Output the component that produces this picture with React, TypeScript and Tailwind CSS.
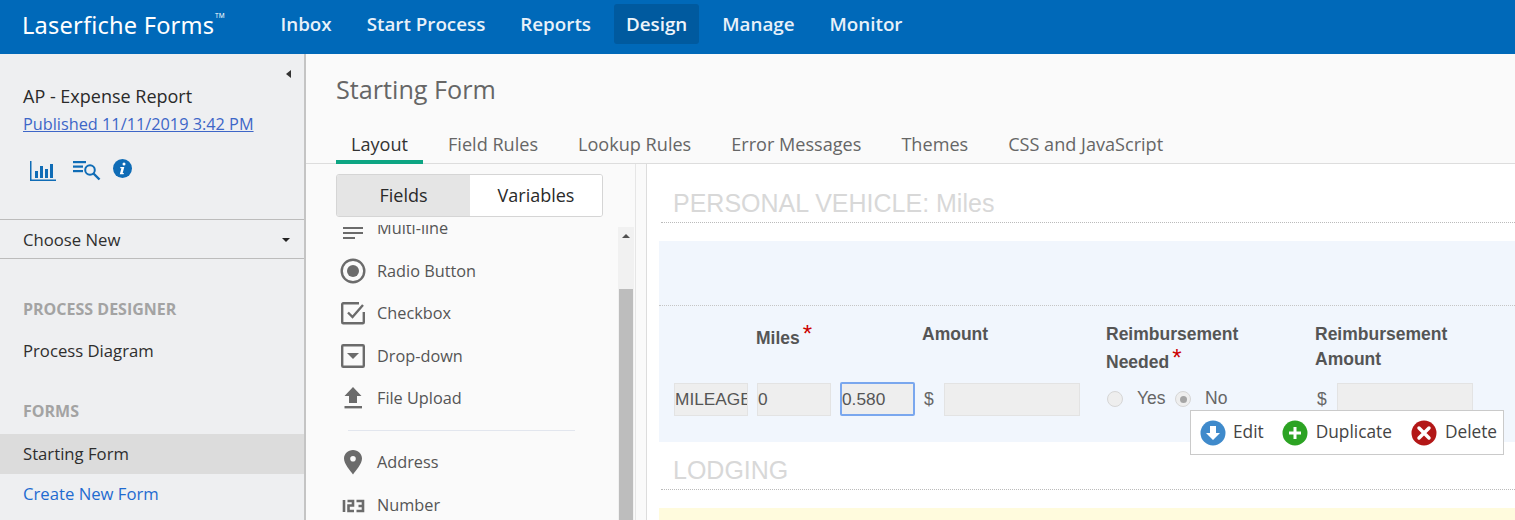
import type { ReactNode } from "react";

const navItems = ["Inbox", "Start Process", "Reports", "Design", "Manage", "Monitor"];
const tabs = ["Layout", "Field Rules", "Lookup Rules", "Error Messages", "Themes", "CSS and JavaScript"];

function ChartIcon() {
  return (
    <svg width="27" height="20" viewBox="0 0 27 20" fill="#0f6cb6">
      <rect x="0" y="0" width="1.500" height="20" />
      <rect x="0" y="18.500" width="26" height="1.500" />
      <rect x="5" y="10" width="3" height="7" />
      <rect x="10" y="5" width="3" height="12" />
      <rect x="15" y="8" width="3" height="9" />
      <rect x="20" y="3" width="3" height="14" />
    </svg>
  );
}

function SearchListIcon() {
  return (
    <svg width="28" height="20" viewBox="0 0 28 20" fill="none">
      <rect x="0" y="0" width="13" height="2.200" fill="#0f6cb6" />
      <rect x="0" y="4.500" width="10" height="2.200" fill="#0f6cb6" />
      <rect x="0" y="9" width="10" height="2.200" fill="#0f6cb6" />
      <circle cx="17" cy="9" r="4.800" stroke="#0f6cb6" strokeWidth="2" />
      <path d="M20.500 12.500L26.500 18.500" stroke="#0f6cb6" strokeWidth="2.400" />
    </svg>
  );
}

function InfoIcon() {
  return (
    <svg width="19" height="19" viewBox="0 0 19 19">
      <circle cx="9.500" cy="9.500" r="9.500" fill="#0f6cb6" />
      <circle cx="11" cy="5" r="1.500" fill="#fff" />
      <path d="M7.400 8h3.900l-1.600 6h1.200l-.3 1.200H6.800l1.600-6H7.100z" fill="#fff" />
    </svg>
  );
}

const fieldIcons: Record<string, ReactNode> = {
  "Radio Button": (
    <svg width="26" height="26" viewBox="0 0 26 26">
      <circle cx="13" cy="13" r="11.300" fill="none" stroke="#6b6b6b" strokeWidth="2.400" />
      <circle cx="13" cy="13" r="6" fill="#6b6b6b" />
    </svg>
  ),
  Checkbox: (
    <svg width="26" height="26" viewBox="0 0 26 26" fill="none" stroke="#6b6b6b" strokeWidth="2.400">
      <path d="M19 3.200H3.200a1 1 0 00-1 1v18a1 1 0 001 1h19.600a1 1 0 001-1V12" />
      <path d="M8 12.500l4.500 4.500L23 5" />
    </svg>
  ),
  "Drop-down": (
    <svg width="26" height="26" viewBox="0 0 26 26">
      <rect x="2.200" y="2.200" width="21.600" height="21.600" rx="1" fill="none" stroke="#6b6b6b" strokeWidth="2.400" />
      <path d="M7 10h12l-6 6z" fill="#6b6b6b" />
    </svg>
  ),
  "File Upload": (
    <svg width="26" height="26" viewBox="0 0 26 26" fill="#6b6b6b">
      <path d="M13 2l8.500 9H17v7H9v-7H4.500z" />
      <rect x="4.500" y="21" width="17.500" height="2.400" />
    </svg>
  ),
  Address: (
    <svg width="26" height="26" viewBox="0 0 26 26">
      <path
        fillRule="evenodd"
        d="M13 1c5 0 9 3.700 9 8.500C22 15 16 21 13 25.500 10 21 4 15 4 9.500 4 4.700 8 1 13 1zm0 6a2.800 2.800 0 100 5.600A2.800 2.800 0 0013 7z"
        fill="#6b6b6b"
      />
    </svg>
  ),
  Number: (
    <svg width="26" height="26" viewBox="0 0 26 26" fill="none" stroke="#6b6b6b" strokeWidth="2.600">
      <path d="M4 8v12M7.500 9H13v4.500H8.500V19H14M16.500 9H23v10h-6.500M18.500 14H23" />
    </svg>
  ),
};

function FieldRow({ name }: { name: string }) {
  return (
    <div className="flex h-[42.500px] items-center gap-[11px] pl-[34px]">
      <span className="flex h-[26px] w-[26px] items-center justify-center">{fieldIcons[name]}</span>
      <span className="text-[16.300px] text-[#555]">{name}</span>
    </div>
  );
}

function Label({ children, required }: { children: ReactNode; required?: boolean }) {
  return (
    <span className="text-[17.500px] leading-[25px] font-bold text-[#555]">
      {children}
      {required && <span className="relative -top-[2px] ml-[3px] text-[24px] leading-none font-normal text-[#c00]">*</span>}
    </span>
  );
}

function TextBox({ value, className }: { value?: string; className: string }) {
  return (
    <input
      readOnly
      value={value ?? ""}
      className={`h-[33px] border border-[#e3e3e3] bg-[#eee] px-0 text-[17.300px] text-[#555] outline-none ${className}`}
    />
  );
}

function Radio({ checked }: { checked?: boolean }) {
  return (
    <span className="flex h-[16px] w-[16px] items-center justify-center rounded-full border border-[#d6d6d6] bg-[#eee]">
      {checked && <span className="h-[7px] w-[7px] rounded-full bg-[#a5a5a5]" />}
    </span>
  );
}

function ActionIcon({ color, children }: { color: string; children: ReactNode }) {
  return (
    <svg width="26" height="26" viewBox="0 0 26 26">
      <circle cx="13" cy="13" r="12.500" fill={color} />
      {children}
    </svg>
  );
}

export default function App() {
  return (
    <div className="flex h-[520px] w-[1515px] flex-col overflow-hidden bg-white font-['Open_Sans',sans-serif]">
      {/* top bar */}
      <header className="flex h-[54px] shrink-0 items-start bg-[#0069b9] pt-[4px]">
        <div className="relative w-[268px] pl-[22px] text-[23.600px] leading-[42px] tracking-[0.2px] text-white font-['Noto_Sans',sans-serif]">
          Laserfiche Forms
          <span className="absolute top-[9px] left-[215px] text-[6.500px] leading-none">TM</span>
        </div>
        <nav className="ml-[0.500px] flex items-center">
          {navItems.map((item) => (
            <a
              key={item}
              className={`mr-[11px] flex h-[40px] items-center rounded-[3px] px-[12px] text-[18.800px] font-semibold ${
                item === "Design" ? "bg-[#005a9f] text-[#eef4fa]" : "text-[#e8f1f9]"
              }`}
            >
              {item}
            </a>
          ))}
        </nav>
      </header>

      <div className="flex min-h-0 flex-1">
        {/* left sidebar */}
        <aside className="relative w-[306px] shrink-0 border-r-2 border-[#c4c4c4] bg-[#eeeff1]">
          <span className="absolute top-[16px] right-[13px] h-0 w-0 border-y-[4px] border-r-[5px] border-y-transparent border-r-[#333]" />
          <div className="h-[165px] pt-[29px] pl-[23px]">
            <div className="text-[18px] leading-[26px] font-medium text-[#2a2a2a]">AP - Expense Report</div>
            <a className="mt-[1px] block text-[16.300px] leading-[29px] text-[#3d66c8] underline">Published 11/11/2019 3:42 PM</a>
            <div className="mt-[22px] flex items-start gap-[16px] pl-[7px]">
              <ChartIcon />
              <SearchListIcon />
              <span className="-mt-[2px] -ml-[4px]">
                <InfoIcon />
              </span>
            </div>
          </div>
          <div className="flex h-[40px] items-center justify-between border-y border-[#bcbcbc] pt-[2px] pr-[14px] pl-[23px] text-[16.700px] font-medium text-[#2e2e2e]">
            Choose New
            <span className="h-0 w-0 border-x-[4.500px] border-t-[4.500px] border-x-transparent border-t-[#222]" />
          </div>
          <div className="mt-[38px] pl-[23px] text-[16px] leading-[24px] font-bold text-[#a3a3a3]">PROCESS DESIGNER</div>
          <div className="mt-[18px] pl-[23px] text-[16.700px] leading-[24px] font-medium text-[#2e2e2e]">Process Diagram</div>
          <div className="mt-[36px] pl-[23px] text-[16px] leading-[24px] font-bold text-[#a3a3a3]">FORMS</div>
          <div className="mt-[11px] flex h-[40px] items-center bg-[#dcdcdc] pl-[23px] text-[16.700px] font-medium text-[#2e2e2e]">Starting Form</div>
          <div className="flex h-[40px] items-center pl-[23px] text-[16.700px] font-medium text-[#1f6bd0]">Create New Form</div>
        </aside>

        {/* main */}
        <main className="flex min-w-0 flex-1 flex-col bg-[#fafafa]">
          <div className="h-[110px] shrink-0 border-b border-[#ddd]">
            <h1 className="pt-[16px] pl-[30px] text-[25.200px] leading-[38px] text-[#666]">Starting Form</h1>
            <div className="mt-[17px] flex pl-[30px]">
              {tabs.map((tab) => (
                <div
                  key={tab}
                  className={`mr-[10px] h-[39px] px-[15px] pt-[6px] text-[18.100px] leading-[26px] ${
                    tab === "Layout" ? "border-b-4 border-[#0da583] text-[#333]" : "text-[#666]"
                  }`}
                >
                  {tab}
                </div>
              ))}
            </div>
          </div>

          <div className="flex min-h-0 flex-1">
            {/* field palette */}
            <div className="w-[341px] shrink-0 border-r border-[#ddd]">
              <div className="flex h-full w-[330px] flex-col border-r border-[#e6e6e6]">
                <div className="mt-[10px] ml-[30px] flex h-[43px] w-[267px] shrink-0 overflow-hidden rounded-[3px] border border-[#d5d5d5] text-[18px] font-medium text-[#2a2a2a]">
                  <div className="flex w-[133px] items-center justify-center bg-[#e5e5e5]">Fields</div>
                  <div className="flex flex-1 items-center justify-center bg-white">Variables</div>
                </div>
                <div className="relative mt-[8px] min-h-0 flex-1 overflow-hidden">
                  <div className="-mt-[18px]">
                    <div className="flex h-[42.500px] items-center gap-[11px] pl-[34px]">
                      <svg width="26" height="26" viewBox="0 0 26 26" fill="#6b6b6b">
                        <rect x="3" y="12" width="20" height="2" />
                        <rect x="3" y="17" width="20" height="2" />
                        <rect x="3" y="22" width="12" height="2" />
                      </svg>
                      <span className="text-[16.300px] text-[#555]">Multi-line</span>
                    </div>
                    <FieldRow name="Radio Button" />
                    <FieldRow name="Checkbox" />
                    <FieldRow name="Drop-down" />
                    <FieldRow name="File Upload" />
                    <div className="my-[10px] mr-[60px] ml-[42px] border-t border-[#e2e6ee]" />
                    <FieldRow name="Address" />
                    <div className="pt-[1px]">
                      <FieldRow name="Number" />
                    </div>
                  </div>
                  {/* scrollbar */}
                  <div className="absolute top-[2px] right-[1px] bottom-0 w-[16px] bg-[#f1f1f1]">
                    <span className="absolute top-[7px] left-[4px] h-0 w-0 border-x-[4px] border-b-[4px] border-x-transparent border-b-[#505050]" />
                    <div className="absolute top-[62px] right-[1px] bottom-0 left-[1px] bg-[#bdbdbd]" />
                  </div>
                </div>
              </div>
            </div>

            {/* form canvas */}
            <div className="min-w-0 flex-1 bg-white">
              <div className="mt-[22px] mr-0 ml-[14px] h-[37px] border-b border-dotted border-[#bbb] pl-[12px] font-['Liberation_Sans',sans-serif] text-[25px] leading-[34px] text-[#d8d8d8]">
                PERSONAL VEHICLE: Miles
              </div>
              <section className="relative mt-[18px] ml-[12px] h-[201px] bg-[#f1f6fd] font-['Liberation_Sans',sans-serif]">
                <div className="h-[65px] border-b border-dotted border-[#c6c6c6]" />
                <div className="flex h-[76px] pt-[16px]">
                  <div className="ml-[97px] w-[166px] pt-[2px]">
                    <Label required>Miles</Label>
                  </div>
                  <div className="w-[184px]">
                    <Label>Amount</Label>
                  </div>
                  <div className="w-[209px]">
                    <Label>Reimbursement</Label>
                    <br />
                    <span className="relative top-[1px]">
                      <Label required>Needed</Label>
                    </span>
                  </div>
                  <div className="w-[140px]">
                    <Label>Reimbursement Amount</Label>
                  </div>
                </div>
                <div className="flex items-center pl-[15px] text-[17.500px] text-[#666]">
                  <TextBox value="MILEAGE" className="w-[74px]" />
                  <TextBox value="0" className="ml-[9px] w-[74px]" />
                  <input
                    readOnly
                    value="0.580"
                    className="ml-[9px] h-[34px] w-[75px] rounded-[2px] border-2 border-[#7aa7ee] bg-[#eee] px-0 text-[17.300px] text-[#555] outline-none"
                  />
                  <span className="ml-[9px] w-[20px]">$</span>
                  <TextBox className="w-[136px]" />
                  <span className="ml-[27px]">
                    <Radio />
                  </span>
                  <span className="ml-[14px] w-[38px] pb-[2px]">Yes</span>
                  <Radio checked />
                  <span className="ml-[14px] w-[112px] pb-[2px]">No</span>
                  <span className="w-[20px]">$</span>
                  <TextBox className="w-[136px]" />
                </div>
                {/* hover toolbar */}
                <div className="absolute top-[169px] left-[531px] flex h-[45px] w-[314px] items-center border border-[#cacaca] bg-white pl-[9px] font-['Open_Sans',sans-serif] text-[17.300px] leading-[22px] text-[#444]">
                  <ActionIcon color="#3f8acb">
                    <path d="M10 6h6v7h4l-7 7-7-7h4z" fill="#fff" />
                  </ActionIcon>
                  <span className="relative -top-[1px] ml-[7px]">Edit</span>
                  <span className="ml-[18px]">
                    <ActionIcon color="#2ca323">
                      <path d="M11.500 7h3v4.500H19v3h-4.500V19h-3v-4.500H7v-3h4.500z" fill="#fff" />
                    </ActionIcon>
                  </span>
                  <span className="relative -top-[1px] ml-[8px]">Duplicate</span>
                  <span className="ml-[19px]">
                    <ActionIcon color="#b31717">
                      <path d="M8 8l10 10M18 8L8 18" stroke="#fff" strokeWidth="3.500" strokeLinecap="round" />
                    </ActionIcon>
                  </span>
                  <span className="relative -top-[1px] ml-[8px]">Delete</span>
                </div>
              </section>
              <div className="mt-[11px] ml-[14px] h-[37px] border-b border-dotted border-[#bbb] pl-[12px] font-['Liberation_Sans',sans-serif] text-[25px] leading-[34px] text-[#d8d8d8]">
                LODGING
              </div>
              <div className="mt-[18px] ml-[12px] h-[30px] bg-[#fffbdd]" />
            </div>
          </div>
        </main>
      </div>
    </div>
  );
}
